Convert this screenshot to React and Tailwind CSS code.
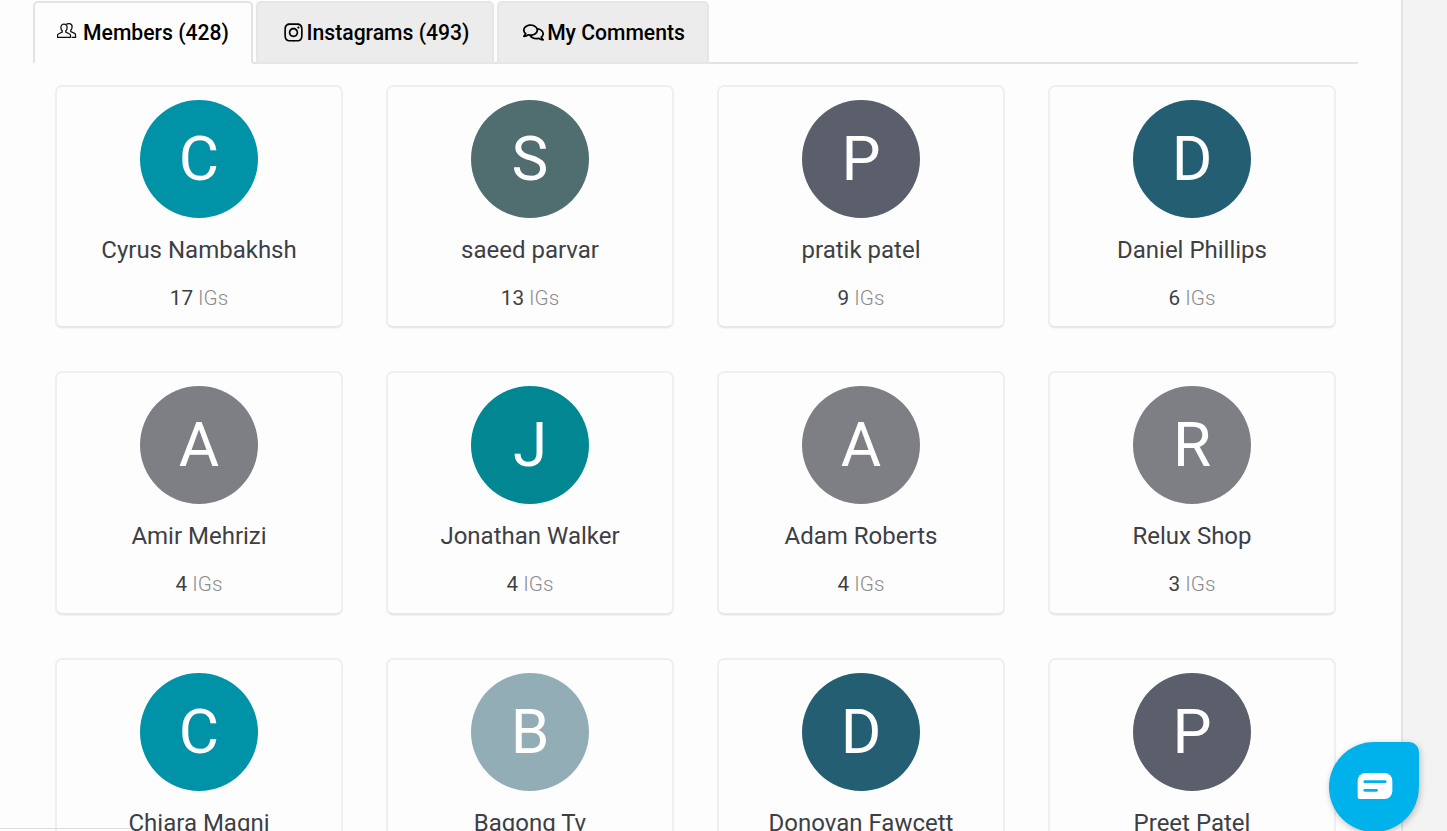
import React from "react";
import { FaInstagram, FaRegComments } from "react-icons/fa";

const rows = [
  [["C","Cyrus Nambakhsh","17","bg-[#0093a8]"],["S","saeed parvar","13","bg-[#506d70]"],["P","pratik patel","9","bg-[#5a5f6b]"],["D","Daniel Phillips","6","bg-[#235e72]"]],
  [["A","Amir Mehrizi","4","bg-[#7e7f84]"],["J","Jonathan Walker","4","bg-[#008792]"],["A","Adam Roberts","4","bg-[#7e7f84]"],["R","Relux Shop","3","bg-[#7e7f84]"]],
  [["C","Chiara Magni","3","bg-[#0093a8]"],["B","Bagong Tv","3","bg-[#93adb7]"],["D","Donovan Fawcett","3","bg-[#235e72]"],["P","Preet Patel","3","bg-[#5a5f6b]"]],
];

function MembersIcon() {
  return (
    <svg width="20" height="16" viewBox="0 0 20 16" fill="none" stroke="#111" strokeWidth="1.3" className="mr-[3px] -mt-[3px]">
      <path d="M7 1.2c-2 0-3.1 1.4-3.1 3.2 0 1.4.5 2.6 1.3 3.3v1.5L1.4 11c-.6.3-.9.8-.9 1.4v2h13v-2c0-.6-.3-1.1-.9-1.4L8.8 9.2V7.700c.8-.7 1.300-1.900 1.300-3.300C10.100 2.600 9 1.200 7 1.200z" />
      <path d="M9.300 1.500C10 .9 11 .6 12 .6c2 0 3.100 1.400 3.100 3.200 0 1.400-.5 2.600-1.300 3.300v1.500l3.800 1.700c.6.300.9.800.9 1.400v2.700h-3.800" />
    </svg>
  );
}

function Tab({ icon, label, active, w }) {
  return (
    <div className={`${w} h-[63px] -mb-[2px] flex items-center justify-center gap-[3px] rounded-t-[5px] border-2 text-[21.15px] font-medium text-black ${active ? "bg-[#fdfdfd] border-[#e3e3e3] border-b-[#fdfdfd] z-10" : "bg-[#ececec] border-[#e6e6e6]"}`}>
      {icon}
      <span>{label}</span>
    </div>
  );
}

function Card({ l, name, n, c }) {
  return (
    <div className="w-[288px] h-[243.5px] flex flex-col items-center rounded-[7px] border-2 border-[#efefef] border-b-[#e8e8e8] bg-[#fdfdfd] pt-[13px] shadow-[0_1px_1px_rgba(0,0,0,0.04)]">
      <div className={`w-[118px] h-[118px] shrink-0 rounded-full flex items-center justify-center text-white text-[62px] leading-none ${c}`}>{l}</div>
      <div className="mt-[16px] text-[24px] leading-[32px] text-[#3d3f44] whitespace-nowrap">{name}</div>
      <div className="mt-[18px] text-[20.7px] leading-[28px] text-[#3d3f44] font-light whitespace-nowrap">
        <span className="font-normal">{n}</span> <span className="text-[#8c8c8c]">IGs</span>
      </div>
    </div>
  );
}

export default function App() {
  return (
    <div className="relative h-[831px] w-[1447px] overflow-hidden flex bg-[#f3f3f3] font-['Roboto',sans-serif]">
      <main className="w-[1403px] shrink-0 h-full bg-[#fdfdfd] border-r-2 border-[#e3e3e3] pl-[33px] pr-[43px] pt-[1px]">
        <div className="flex gap-[3px] border-b-2 border-[#e3e3e3] h-[63px]">
          <Tab w="w-[220px]" active icon={<MembersIcon />} label="Members (428)" />
          <Tab w="w-[238px]" icon={<FaInstagram className="text-[21px] ml-[2px]" />} label="Instagrams (493)" />
          <Tab w="w-[212px]" icon={<FaRegComments className="text-[21px] ml-[2px]" />} label="My Comments" />
        </div>
        <div className="mt-[20.75px] ml-[22px] grid grid-cols-[repeat(4,288px)] gap-x-[43px] gap-y-[43px]">
          {rows.flat().map((r, i) => <Card key={i} l={r[0]} name={r[1]} n={r[2]} c={r[3]} />)}
        </div>
      </main>
      <div className="absolute left-0 bottom-[2px] w-[130px] h-[1px] bg-[#dedede]" />
      <div className="absolute left-[1329px] top-[742px] w-[90px] h-[90px] bg-[#00b2ec] rounded-t-[45px] rounded-bl-[45px] rounded-br-[45px] rounded-tr-[10px] shadow-[1px_2px_6px_rgba(0,0,0,0.25)] flex items-center justify-center">
        <svg width="36" height="26" viewBox="0 0 36 27" className="mt-[-2px] ml-[2px]">
          <path d="M8 0h20a8 8 0 0 1 8 8v11a8 8 0 0 1-8 8H2a2 2 0 0 1-2-2V8a8 8 0 0 1 8-8z" fill="#fff" />
          <rect x="6" y="7.500" width="24" height="3" rx="1.500" fill="#00b2ec" />
          <rect x="6" y="16.500" width="15" height="3" rx="1.500" fill="#00b2ec" />
        </svg>
      </div>
    </div>
  );
}
